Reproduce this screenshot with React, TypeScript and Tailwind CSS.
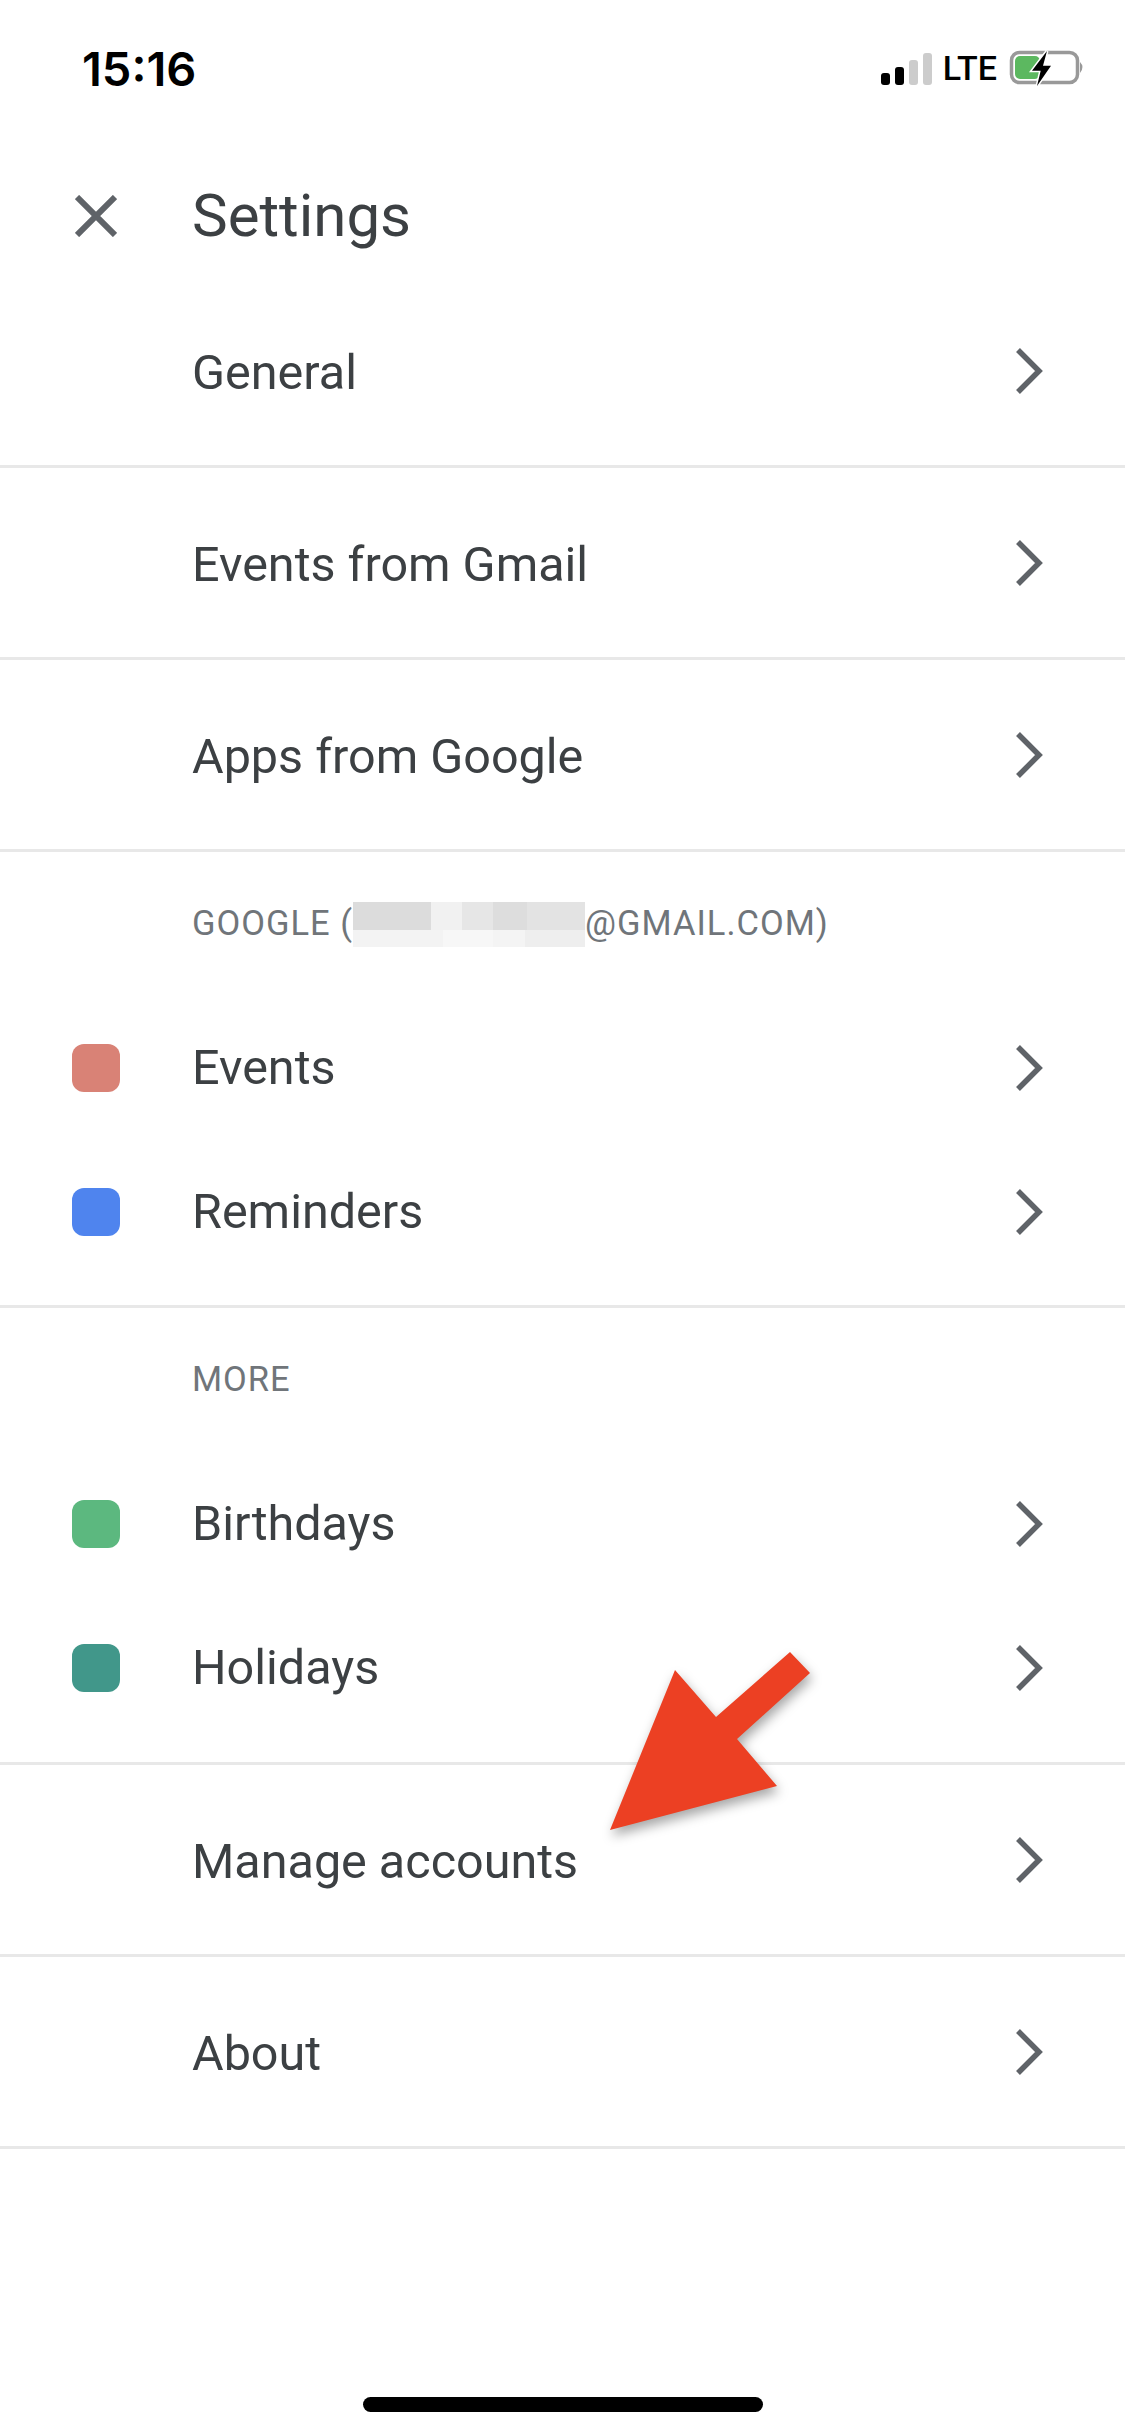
const Chevron = () => (
  <svg width="30" height="50" viewBox="0 0 30 50" fill="none" className="shrink-0">
    <path d="M3 4 L24 25 L3 46" stroke="#5f6368" strokeWidth="5.5" />
  </svg>
);

function Row({ label, color, className = "" }: { label: string; color?: string; className?: string }) {
  return (
    <div className={`flex items-center pr-[80px] ${color ? "pl-[72px]" : "pl-[192px]"} ${className}`}>
      {color && <div className={`w-[48px] h-[48px] rounded-[12px] mr-[72px] ${color}`} />}
      <span className={`flex-1 text-[48.5px] leading-none text-[#3c4043] ${color ? "" : "pt-[5px]"}`}>{label}</span>
      <Chevron />
    </div>
  );
}

const SectionTitle = ({ children }: { children: React.ReactNode }) => (
  <div className="h-[144px] flex items-center pl-[192px] text-[34.5px] tracking-[1px] text-[#70757a]">
    {children}
  </div>
);

// pixelated blur over the e-mail address
const Redacted = () => (
  <span className="w-[232px] h-[45px] flex flex-col shrink-0">
    <span className="flex h-[28px]">
      <span className="w-[78px] bg-[#dcdcdc]" />
      <span className="w-[31px] bg-[#f1f1f1]" />
      <span className="w-[31px] bg-[#e6e6e6]" />
      <span className="w-[34px] bg-[#dddddd]" />
      <span className="w-[58px] bg-[#e3e3e3]" />
    </span>
    <span className="flex h-[17px]">
      <span className="w-[90px] bg-[#f3f3f3]" />
      <span className="w-[50px] bg-[#f7f7f7]" />
      <span className="w-[32px] bg-[#f4f4f4]" />
      <span className="w-[60px] bg-[#eeeeee]" />
    </span>
  </span>
);

export default function App() {
  return (
    <div className="relative w-[1125px] h-[2436px] bg-white flex flex-col overflow-hidden font-['Roboto',sans-serif]">
      {/* status bar */}
      <div className="h-[136px] flex items-center justify-between pl-[82px] pr-[38px]">
        <span className="text-[47px] font-semibold leading-none text-black font-['Inter',sans-serif]">15:16</span>
        <div className="flex items-center">
          <svg width="53" height="33" viewBox="0 0 53 33">
            <rect x="2" y="21" width="9" height="12" rx="3" fill="#000" />
            <rect x="16" y="15" width="9" height="18" rx="3" fill="#000" />
            <rect x="30" y="8" width="9" height="25" rx="3" fill="#ccc" />
            <rect x="44" y="1" width="9" height="32" rx="3" fill="#ccc" />
          </svg>
          <span className="ml-[11px] mr-[11px] text-[34px] font-medium leading-none text-black">LTE</span>
          <svg width="79" height="38" viewBox="0 0 79 38" fill="none">
            <rect x="3.5" y="3.5" width="66" height="30" rx="8" stroke="#999" strokeWidth="3.5" />
            <rect x="7" y="7" width="25" height="23" rx="5" fill="#5cb860" />
            <path d="M72 13 Q77 18 72 24 Z" fill="#999" />
            <path d="M39 2 L24 21.7 L32.7 21.7 L29 37 L43 16.7 L35 16.7 Z" fill="#000" stroke="#fff" strokeWidth="3" paintOrder="stroke" />
          </svg>
        </div>
      </div>

      {/* title bar */}
      <div className="h-[140px] pt-[20px] flex items-center pl-[75px]">
        <svg width="42" height="42" viewBox="0 0 42 42" fill="none" className="shrink-0">
          <path d="M2 2 L40 40 M40 2 L2 40" stroke="#5f6368" strokeWidth="6" />
        </svg>
        <h1 className="ml-[75px] text-[60px] leading-none text-[#3c4043]">Settings</h1>
      </div>

      <Row label="General" className="h-[192px] border-b-[3px] border-[#e8e8e8]" />
      <Row label="Events from Gmail" className="h-[192px] border-b-[3px] border-[#e8e8e8]" />
      <Row label="Apps from Google" className="h-[192px] border-b-[3px] border-[#e8e8e8]" />

      <SectionTitle>
        <span>GOOGLE (</span>
        <Redacted />
        <span>@GMAIL.COM)</span>
      </SectionTitle>
      <div className="pb-[21px] border-b-[3px] border-[#e8e8e8]">
        <Row label="Events" color="bg-[#d98276]" className="h-[144px]" />
        <Row label="Reminders" color="bg-[#4f84ee]" className="h-[144px]" />
      </div>

      <SectionTitle>MORE</SectionTitle>
      <div className="pb-[22px] border-b-[3px] border-[#e8e8e8]">
        <Row label="Birthdays" color="bg-[#5cb87f]" className="h-[144px]" />
        <Row label="Holidays" color="bg-[#41978a]" className="h-[144px]" />
      </div>

      <Row label="Manage accounts" className="h-[192px] border-b-[3px] border-[#e8e8e8]" />
      <Row label="About" className="h-[192px] border-b-[3px] border-[#e8e8e8]" />

      {/* home indicator */}
      <div className="flex-1 flex items-end justify-center pb-[24px]">
        <div className="w-[400px] h-[15px] rounded-full bg-black" />
      </div>

      {/* annotation arrow */}
      <svg
        width="220"
        height="195"
        viewBox="0 0 220 195"
        className="absolute left-[600px] top-[1645px] overflow-visible drop-shadow-[2px_6px_6px_rgba(0,0,0,0.35)]"
      >
        <path d="M10 185 L75 25 L116 72 L190 7 L210 28 L137 94 L177 141 Z" fill="#ec4023" />
      </svg>
    </div>
  );
}
